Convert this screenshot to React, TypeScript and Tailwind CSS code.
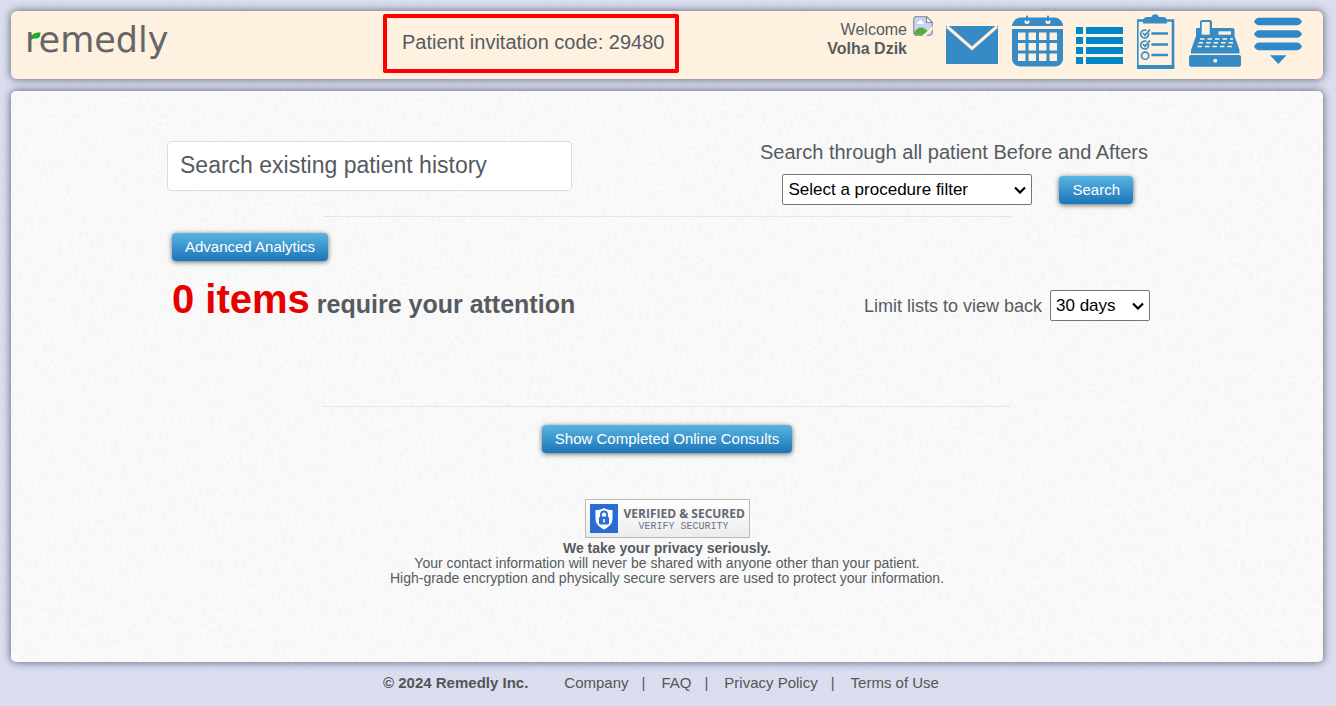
import type { ReactNode } from "react";

const BLUE = "#368bc5";

const footerLinks = ["Company", "FAQ", "Privacy Policy", "Terms of Use"];

function Logo() {
	return (
		<a
			href="#"
			className="relative block font-['DejaVu_Sans',sans-serif] text-[35px] leading-10 text-[#666666]"
		>
			remedly
			<svg
				aria-hidden="true"
				className="absolute left-[6px] top-3 h-[9px] w-[10px]"
				viewBox="0 0 10 9"
			>
				<rect x="1" y="0" width="9" height="9" fill="#fef1e0" />
				<path d="M0 8C0 3 2 .5 9.5 .5C9.5 5 7.5 6.5 4 6.5C2.2 6.5 1 7 0 8Z" fill="#10a81e" />
				<path d="M2 5.2L7 2" stroke="#5fd06a" strokeWidth="0.6" />
			</svg>
		</a>
	);
}

function BrokenImage() {
	return (
		<svg aria-hidden="true" className="h-5 w-5" viewBox="0 0 20 20">
			<path
				d="M2.5.7H13.5L19.3 6.5V17.5L17.5 19.3H2.5L.7 17.5V2.5Z"
				fill="#c5d5f4"
				stroke="#9a9a9a"
				strokeWidth="1.3"
			/>
			<path
				d="M4 7.5C4 5.5 6 5.5 6.5 5C7.5 3.6 9.5 4.5 9.5 6C11 6 11 8 10 8H4Z"
				fill="#fff"
			/>
			<path d="M1.3 16C4 12 8 10 12 13L15.5 15.5L12 18.7H2.5L1.3 17.5Z" fill="#5aab3c" />
			<path d="M9 20L20 10V13L13 20Z" fill="#fef1e0" />
			<path d="M13.5.7V6.5H19.3Z" fill="#fff" stroke="#8c8c8c" strokeWidth="1.2" />
		</svg>
	);
}

function MailIcon() {
	return (
		<svg className="h-14 w-[52px]" viewBox="0 0 52 56">
			<rect y="12" width="52" height="38" fill={BLUE} />
			<path d="M1 12.5L26 34.5L51 12.5" fill="none" stroke="#fef1e0" strokeWidth="3" />
		</svg>
	);
}

function CalendarIcon() {
	const cols = [6, 16.5, 27, 37.5];
	const rows = [18.5, 29, 39.5];
	return (
		<svg className="h-14 w-[52px]" viewBox="-1 0 52 56">
			<path d="M0 11C1 7 4 3.5 9 3.5H42C47 3.5 50 7 51 11V12H0Z" fill={BLUE} />
			<path d="M0 15H51V45C51 49 47 52.5 43 52.5H8C4 52.5 0 49 0 45Z" fill={BLUE} />
			{[15, 36].map((x) => (
				<g key={x}>
					<path
						d={`M${x - 2.5} 6.5V7.5A2.5 2.5 0 0 0 ${x + 2.5} 7.5V6.5Z`}
						fill="#fef1e0"
					/>
					<rect x={x - 1} y="1.5" width="2" height="6" rx="1" fill={BLUE} />
				</g>
			))}
			{rows.map((y) =>
				cols.map((x) => (
					<rect key={`${x}-${y}`} x={x} y={y} width="7.5" height="7.5" fill="#fef1e0" />
				)),
			)}
		</svg>
	);
}

function ListIcon() {
	return (
		<svg className="h-14 w-12" viewBox="0 0 48 56" fill="#0087c8">
			{[13, 23, 33, 43].map((y) => (
				<g key={y}>
					<rect x="0" y={y} width="7" height="7" />
					<rect x="10" y={y} width="37" height="7" />
				</g>
			))}
		</svg>
	);
}

function ClipboardIcon() {
	return (
		<svg className="h-14 w-[39px]" viewBox="1 0 39 56" fill="none" stroke={BLUE}>
			<path d="M1.3 6.5H37V53H1.3Z" strokeWidth="2.6" />
			<path d="M0 53H38.3" strokeWidth="4" />
			<path
				d="M7 8.5C7 5 8 3.5 11 3H15.5C16 1 17.5.2 19.2.2C21 .2 22.4 1 23 3H27.5C30.5 3.5 31 5 31 8.5V9.5H7Z"
				fill={BLUE}
				stroke="none"
			/>
			{[20, 31].map((y) => (
				<g key={y}>
					<path
						d={`M12.5 ${y - 1}A4 4 0 1 1 10.5 ${y - 3.5}`}
						strokeWidth="1.6"
					/>
					<path d={`M7 ${y - 1}L9 ${y + 1.3}L14 ${y - 4.5}`} strokeWidth="1.8" />
				</g>
			))}
			<circle cx="9.2" cy="41.7" r="3.6" strokeWidth="1.6" />
			<path
				d="M16.5 19.5H31M16.5 30.5H31M16.5 41H31"
				strokeWidth="2.6"
				strokeLinecap="round"
			/>
		</svg>
	);
}

function RegisterIcon() {
	return (
		<svg className="h-14 w-[52px]" viewBox="0 0 52 56">
			<path
				d="M8 14H11V8C11 7 12 6 13 6H21C22 6 23 7 23 8V14H43C45 14 45.5 15 45.5 16V22L50.5 36V39.5H2V36L7 22V16C7 15 7 14 8 14Z"
				fill={BLUE}
			/>
			<rect x="12.7" y="8" width="8" height="12.7" fill="#fef1e0" />
			<rect x="29.5" y="17.3" width="12.5" height="3.4" fill="#fef1e0" />
			<path
				d="M11 25H44M9.6 28.7H45M8.4 32.5H46"
				stroke="#fef1e0"
				strokeWidth="1.5"
				strokeDasharray="4.5 3"
			/>
			<rect y="41" width="52" height="11.8" rx="2" fill={BLUE} />
			<circle cx="26.3" cy="46.7" r="2" fill="#fef1e0" />
		</svg>
	);
}

function MenuIcon() {
	return (
		<svg className="h-14 w-12" viewBox="0 0 48 56" fill="#2f89c8">
			{[3.7, 16.2, 28.6].map((y) => (
				<path
					key={y}
					d={`M5 ${y}H43Q46 ${y} 48 ${y + 3.8}Q46 ${y + 7.6} 43 ${y + 7.6}H5Q2 ${y + 7.6} 0 ${y + 3.8}Q2 ${y} 5 ${y}Z`}
				/>
			))}
			<path d="M16 41.3H32.5L24.3 50Z" />
		</svg>
	);
}

const toolbar = [
	{ label: "Messages", Icon: MailIcon },
	{ label: "Calendar", Icon: CalendarIcon },
	{ label: "Lists", Icon: ListIcon },
	{ label: "Tasks", Icon: ClipboardIcon },
	{ label: "Billing", Icon: RegisterIcon },
	{ label: "Menu", Icon: MenuIcon },
];

function BlueButton({ children }: { children: ReactNode }) {
	return (
		<button
			type="button"
			className="h-7 rounded-[4px] bg-linear-to-b from-[#58b5e0] to-[#1b75b9] px-[13px] text-[15px] leading-7 text-white shadow-[0_1px_5px_rgba(0,0,0,0.6)]"
		>
			{children}
		</button>
	);
}

function PaperTexture() {
	return (
		<svg
			aria-hidden="true"
			className="pointer-events-none absolute inset-0 h-full w-full rounded-[5px] opacity-5"
		>
			<filter id="paper">
				<feTurbulence
					type="fractalNoise"
					baseFrequency="0.25"
					numOctaves="3"
					stitchTiles="stitch"
				/>
				<feColorMatrix values="0 0 0 0 0.4  0 0 0 0 0.4  0 0 0 0 0.4  2.5 0 0 0 -0.9" />
			</filter>
			<rect width="100%" height="100%" filter="url(#paper)" />
		</svg>
	);
}

function SecurityBadge() {
	return (
		<a
			href="#"
			className="flex h-[39px] w-[165px] items-center gap-[6px] border border-[#b9b9b9] bg-linear-to-b from-white to-[#ececec] pl-1"
		>
			<svg aria-hidden="true" className="h-[29px] w-7 shrink-0" viewBox="0 0 28 29">
				<rect width="28" height="29" fill="#2b6cd4" />
				<path
					d="M14 4C16 5.5 19 6 22.5 6V15C22.5 20 18 23.5 14 25.5C10 23.5 5.5 20 5.5 15V6C9 6 12 5.5 14 4Z"
					fill="#fff"
				/>
				<rect x="9" y="12.5" width="10" height="8" rx="1.5" fill="#2b6cd4" />
				<path
					d="M11 13V10.5A3 3 0 0 1 17 10.5V13"
					fill="none"
					stroke="#2b6cd4"
					strokeWidth="1.8"
				/>
				<path d="M14 15V18.5" stroke="#fff" strokeWidth="1.6" />
			</svg>
			<div className="w-[120px] whitespace-nowrap text-center">
				<div className="font-['Open_Sans',sans-serif] text-xs font-bold leading-4 text-[#626975]">
					VERIFIED &amp; SECURED
				</div>
				<div className="font-['Liberation_Mono',monospace] text-[10px] leading-[10px] text-[#6b7484]">
					VERIFY SECURITY
				</div>
			</div>
		</a>
	);
}

function Select({ id, options, className }: { id: string; options: string[]; className: string }) {
	return (
		<div className={`relative ${className}`}>
			<select
				id={id}
				className="h-[31px] w-full appearance-none rounded-[2px] border border-[#767676] bg-white pl-[5px] pr-6 text-[17px] leading-6 text-black"
			>
				{options.map((option) => (
					<option key={option}>{option}</option>
				))}
			</select>
			<svg
				aria-hidden="true"
				className="pointer-events-none absolute right-[6px] top-3 h-2 w-3"
				viewBox="0 0 12 8"
			>
				<path d="M1 1.5L6 6.5L11 1.5" fill="none" stroke="#000" strokeWidth="2.2" />
			</svg>
		</div>
	);
}

export default function App() {
	return (
		<div className="min-h-screen bg-[#dadeee] bg-[repeating-linear-gradient(45deg,#dcdff0_0px,#dcdff0_2px,#d8dced_2px,#d8dced_4px)] pb-3 pl-[11px] pr-[13px] pt-[11px] font-['Liberation_Sans',Arial,sans-serif] text-[#555b61]">
			<header className="flex h-[68px] items-start rounded-[6px] bg-[#fef1e0] pl-[14px] pr-[21px] pt-[3px] shadow-[0_0_9px_rgba(40,45,70,0.75)]">
				<div className="w-[358px] pt-[6px]">
					<Logo />
				</div>
				<div className="rounded-[2px] border-4 border-[#ff0000] pb-[15px] pl-[15px] pr-[11px] pt-3 text-xl leading-6">
					Patient invitation code: 29480
				</div>
				<div className="ml-auto flex gap-[13px]">
					<div className="flex gap-[6px]">
						<div className="pt-[6px] text-right leading-[19px]">
							<div>Welcome</div>
							<div className="font-bold">Volha Dzik</div>
						</div>
						<div className="pt-[2px]">
							<BrokenImage />
						</div>
					</div>
					<nav className="flex gap-[13px]">
						{toolbar.map(({ label, Icon }) => (
							<button key={label} type="button" aria-label={label}>
								<Icon />
							</button>
						))}
					</nav>
				</div>
			</header>

			<main className="relative mt-3 rounded-[5px] bg-[#fafafa] pb-[76px] pt-[50px] shadow-[0_0_9px_rgba(40,45,70,0.75)]">
				<PaperTexture />
				<div className="relative mx-auto max-w-[1000px]">
					<div className="flex items-start justify-between pr-[17px]">
						<input
							type="text"
							aria-label="Search existing patient history"
							placeholder="Search existing patient history"
							className="h-[50px] w-[405px] rounded-[4px] border border-[#dcdcdc] bg-white px-3 pb-[2px] text-[23px] placeholder:text-[#555b61]"
						/>
						<div>
							<label htmlFor="procedure" className="block pr-[2px] text-xl leading-[22px]">
								Search through all patient Before and Afters
							</label>
							<div className="mt-[11px] flex items-center justify-end gap-[27px] pr-[17px]">
								<Select
									id="procedure"
									options={["Select a procedure filter"]}
									className="w-[250px]"
								/>
								<BlueButton>Search</BlueButton>
							</div>
						</div>
					</div>
					<hr className="mx-auto mt-[11px] w-[688px] border-[#e6e6e6]" />

					<div className="mt-4 pl-[5px]">
						<BlueButton>Advanced Analytics</BlueButton>
					</div>
					<div className="mt-[15px] flex items-center justify-between pl-[5px] pr-[17px]">
						<h1 className="text-[25px] font-bold leading-[46px]">
							<span className="text-[40px] text-[#e60000]">0 items</span> require your
							attention
						</h1>
						<div className="flex items-center gap-2 pt-2">
							<label htmlFor="limit" className="text-lg">
								Limit lists to view back
							</label>
							<Select
								id="limit"
								options={["30 days", "60 days", "90 days"]}
								className="w-[100px]"
							/>
						</div>
					</div>

					<hr className="mx-auto mt-[79px] w-[688px] border-[#e6e6e6]" />
					<div className="mt-[18px] flex flex-col items-center">
						<BlueButton>Show Completed Online Consults</BlueButton>
						<div className="mt-[46px]">
							<SecurityBadge />
						</div>
						<div className="mt-[3px] text-center text-sm leading-[15px]">
							<p className="font-bold">We take your privacy seriously.</p>
							<p>
								Your contact information will never be shared with anyone other than
								your patient.
							</p>
							<p>
								High-grade encryption and physically secure servers are used to
								protect your information.
							</p>
						</div>
					</div>
				</div>
			</main>

			<footer className="mt-[11px] flex justify-center pr-3 text-[15px] leading-5 text-[#555555]">
				<span className="mr-9 font-bold">© 2024 Remedly Inc.</span>
				<ul className="flex">
					{footerLinks.map((link, i) => (
						<li key={link}>
							{i > 0 && <span className="pl-[13px] pr-4">|</span>}
							<a href="#">{link}</a>
						</li>
					))}
				</ul>
			</footer>
		</div>
	);
}
